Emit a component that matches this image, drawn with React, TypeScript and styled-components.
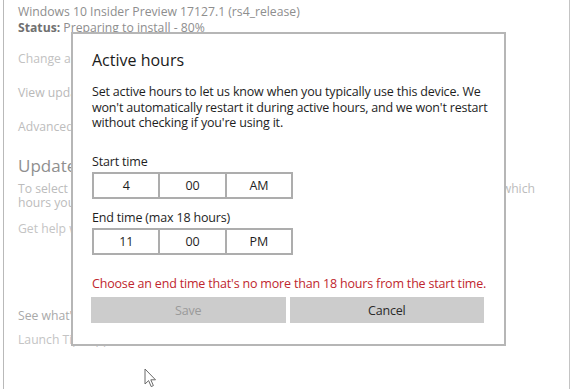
import React from "react";
import styled, { createGlobalStyle } from "styled-components";

const Global = createGlobalStyle`
  html, body { margin: 0; padding: 0; background: #ffffff; }
  body { font-family: "Open Sans", "Noto Sans", sans-serif; }
`;

const Page = styled.div`
  position: relative;
  width: 576px;
  height: 389px;
  overflow: hidden;
  background: #ffffff;
`;

const Frame = styled.div`
  margin-left: 3px;
  width: 567px;
  height: 389px;
  box-sizing: border-box;
  border-left: 1px solid #b9b9b9;
  border-right: 1px solid #c4c4c4;
  padding: 4px 0 0 14px;
  display: flex;
  flex-direction: column;
  font-size: 12.2px;
  line-height: 16px;
`;

const Line = styled.div<{ $color?: string; $mt?: number }>`
  color: ${(p) => p.$color || "#b8b8b8"};
  margin-top: ${(p) => p.$mt || 0}px;
  white-space: nowrap;
`;

const Bold = styled.span`
  font-weight: 700;
  color: #707070;
`;

const Heading = styled.div`
  margin-top: 20px;
  font-size: 17px;
  line-height: 22px;
  color: #8f8f8f;
`;

const Para = styled.div`
  margin-top: 5px;
  width: 517px;
  color: #bcbcbc;
  line-height: 14px;
`;

const ParaRow = styled.div`
  display: flex;
  justify-content: space-between;
  white-space: nowrap;
`;

const Dialog = styled.div`
  position: absolute;
  left: 71px;
  top: 32px;
  width: 435px;
  height: 314px;
  box-sizing: border-box;
  background: #ffffff;
  border: 2px solid #b6b6b6;
  padding: 16px 20px 0 19px;
  display: flex;
  flex-direction: column;
  color: #1e1e1e;
  font-size: 12.5px;
  letter-spacing: -0.18px;
`;

const Title = styled.div`
  font-size: 16px;
  line-height: 21px;
  letter-spacing: 0;
  color: #1a1a1a;
`;

const Body = styled.p`
  margin: 13px 0 0;
  line-height: 15.7px;
  white-space: nowrap;
`;

const Label = styled.div<{ $mt: number }>`
  margin-top: ${(p) => p.$mt}px;
  line-height: 16px;
`;

const Picker = styled.div`
  margin-top: 2px;
  width: 201px;
  height: 27px;
  box-sizing: border-box;
  border: 2px solid #adadad;
  display: flex;
`;

const Cell = styled.div`
  flex: 1;
  display: flex;
  align-items: center;
  justify-content: center;
  & + & { border-left: 2px solid #adadad; }
`;

const ErrorText = styled.div`
  margin-top: 21px;
  line-height: 16px;
  color: #c0262e;
  white-space: nowrap;
`;

const Buttons = styled.div`
  margin-top: 5px;
  margin-left: -1px;
  display: flex;
  gap: 4px;
  height: 26px;
`;

const Button = styled.div<{ $disabled?: boolean }>`
  flex: 1;
  background: #cccccc;
  display: flex;
  align-items: center;
  justify-content: center;
  color: ${(p) => (p.$disabled ? "#9a9a9a" : "#2a2a2a")};
`;

const Cursor = styled.svg`
  position: absolute;
  left: 144px;
  top: 368px;
`;

function TimePicker({ parts }: { parts: string[] }) {
  return (
    <Picker>
      {parts.map((p, i) => (
        <Cell key={i}>{p}</Cell>
      ))}
    </Picker>
  );
}

export default function App() {
  return (
    <>
      <Global />
      <Page>
        <Frame>
          <Line $color="#8e8e8e">Windows 10 Insider Preview 17127.1 (rs4_release)</Line>
          <Line $color="#8e8e8e">
            <Bold>Status:</Bold> Preparing to install - 80%
          </Line>
          <Line $mt={15} $color="#c2c2c2">Change active hours</Line>
          <Line $mt={18} $color="#b9b9b9">View update history</Line>
          <Line $mt={18} $color="#bdbdbd">Advanced options</Line>
          <Heading>Update settings</Heading>
          <Para>
            <ParaRow>
              <span>To select a convenient restart time, we need to know</span>
              <span>which</span>
            </ParaRow>
            <div>hours you typically use this device.</div>
          </Para>
          <Line $mt={11} $color="#c4c4c4">Get help with your settings</Line>
          <Line $mt={71} $color="#a9a9a9">See what's new in this update</Line>
          <Line $mt={8} $color="#c4c4c4">Launch Tips app</Line>
        </Frame>

        <Dialog>
          <Title>Active hours</Title>
          <Body>
            Set active hours to let us know when you typically use this device. We
            <br />
            won't automatically restart it during active hours, and we won't restart
            <br />
            without checking if you're using it.
          </Body>
          <Label $mt={23}>Start time</Label>
          <TimePicker parts={["4", "00", "AM"]} />
          <Label $mt={11}>End time (max 18 hours)</Label>
          <TimePicker parts={["11", "00", "PM"]} />
          <ErrorText>Choose an end time that's no more than 18 hours from the start time.</ErrorText>
          <Buttons>
            <Button $disabled>Save</Button>
            <Button>Cancel</Button>
          </Buttons>
        </Dialog>

        <Cursor width="13" height="21" viewBox="0 0 13 21">
          <path
            d="M1 1 L1 16 L4.6 12.6 L7.2 18.6 L9.4 17.6 L6.8 11.8 L11.5 11.8 Z"
            fill="#ffffff"
            stroke="#6a6a6a"
            strokeWidth="1"
            strokeLinejoin="round"
          />
        </Cursor>
      </Page>
    </>
  );
}
